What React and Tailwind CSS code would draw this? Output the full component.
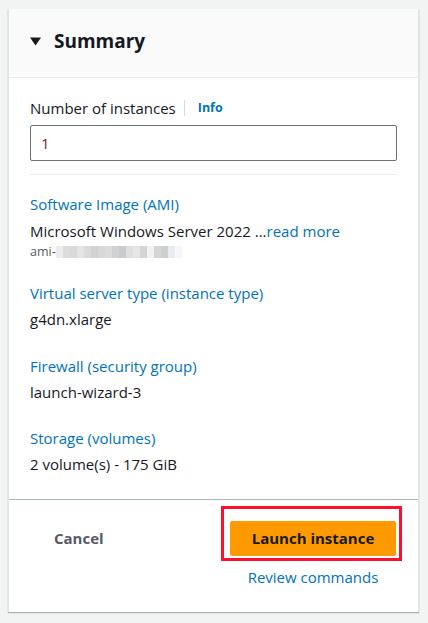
import { Fragment } from 'react';

const items = [
  { label: 'Virtual server type (instance type)', value: 'g4dn.xlarge' },
  { label: 'Firewall (security group)', value: 'launch-wizard-3' },
  { label: 'Storage (volumes)', value: '2 volume(s) - 175 GiB' },
];

// pixelated blur over the AMI id
const blur = ['#ececec', '#dcdcdc', '#d9d9d9', '#e4e4e4', '#dadada', '#d2d2d2', '#d7d7d7', '#dcdcdc', '#d0d3d3', '#c8cbcb', '#dfdfdf', '#e6e6e6', '#d4d4d4', '#f2f2f2', '#d6d6d6', '#cfcfcf', '#e9ecef', '#f5f7fa'];

export default function App() {
  return (
    <div className="min-h-[623px] bg-[#f2f3f3] pt-[9px] pl-[8px] pr-[9px] pb-[10px] text-[#16191f]" style={{ fontFamily: '"Open Sans", "Noto Sans", sans-serif' }}>
      <div className="bg-white border-x border-[#e1e4e5] shadow-[0_1px_1px_0_rgba(0,28,36,0.3)]">
        {/* Header */}
        <div className="h-[69px] bg-[#fafafa] border-b border-[#eaeded] flex items-center pl-[21px]">
          <svg width="11" height="9" viewBox="0 0 11 9" className="mr-[13px] mt-[-3px]">
            <path d="M0 0.5 L11 0.5 L5.5 8.5 Z" fill="#16191f" />
          </svg>
          <h2 className="text-[19px] font-bold leading-none mt-[-4px]">Summary</h2>
        </div>

        {/* Body */}
        <div className="px-[21px] pt-[19px]">
          <div className="flex items-center text-[15px] leading-[22px]">
            <span>Number of instances</span>
            <span className="w-px h-[16px] bg-[#d5dbdb] ml-[8px] mr-[13px]" />
            <span className="text-[12.5px] font-bold text-[#0073bb]">Info</span>
          </div>
          <div className="mt-[6px] h-[36px] border border-[#687078] rounded-[2px] flex items-center pl-[10px] text-[15px] text-[#7d1f1f]">
            1
          </div>
          <div className="mt-[13px] h-px bg-[#eaeded]" />

          <div className="pt-[18px]">
            <div className="text-[15px] leading-[22px] text-[#0073bb]">Software Image (AMI)</div>
            <div className="mt-[5px] text-[15px] leading-[22px]">
              Microsoft Windows Server 2022 ...<span className="text-[#0073bb]">read more</span>
            </div>
            <div className="flex items-center text-[12.5px] leading-[16px] text-[#545b64] mt-[2px]">
              <span>ami-</span>
              <span className="flex h-[12px]">
                {blur.map((c, i) => (
                  <span key={i} className="w-[7px] h-[12px]" style={{ background: c }} />
                ))}
              </span>
            </div>
          </div>

          {items.map((it, i) => (
            <Fragment key={it.label}>
              <div className={i === 0 ? 'pt-[22px]' : i === 1 ? 'pt-[25px]' : 'pt-[24px]'}>
                <div className="text-[15px] leading-[22px] text-[#0073bb]">{it.label}</div>
                <div className="mt-[4px] text-[15px] leading-[22px]">{it.value}</div>
              </div>
            </Fragment>
          ))}
          <div className="h-[24px]" />
        </div>

        {/* Footer */}
        <div className="border-t border-[#aab7b8] flex justify-between items-start pl-[37px] pr-[16px] pt-[6px] pb-[24px]">
          <button className="mt-[21px] px-[8px] text-[15px] font-bold text-[#545b64] leading-[22px]">Cancel</button>
          <div className="flex flex-col items-center">
            <div className="border-[3px] border-[#ff0f2d] pl-[6px] pr-[3px] pt-[12px] pb-[2px]">
              <button className="w-[166px] h-[35px] bg-[#ff9900] rounded-[2px] text-[15px] font-bold text-[#16191f]">
                Launch instance
              </button>
            </div>
            <a className="mt-[5px] pl-[3px] text-[15px] leading-[22px] text-[#0073bb]">Review commands</a>
          </div>
        </div>
      </div>
    </div>
  );
}
